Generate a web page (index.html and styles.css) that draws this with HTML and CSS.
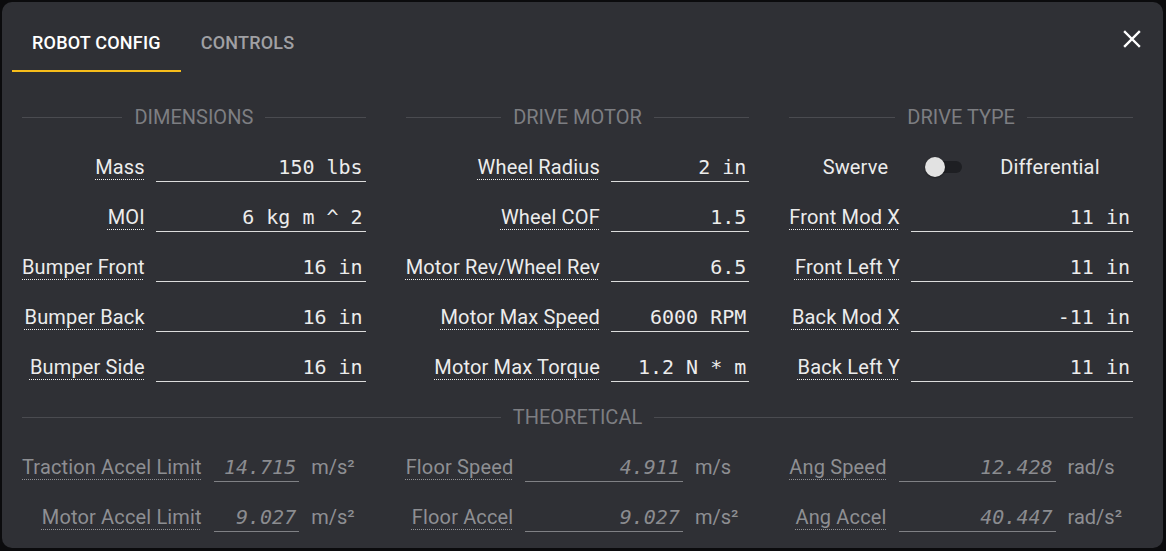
FILE: index.html
```html
<!DOCTYPE html>
<html>
<head>
<meta charset="utf-8">
<link rel="stylesheet" href="styles.css">
</head>
<body>
<div class="dialog">
  <div class="tabs">
    <div class="tab active">ROBOT CONFIG</div>
    <div class="tab">CONTROLS</div>
  </div>
  <svg class="close" viewBox="0 0 18 18" width="18" height="18"><path d="M2 2L16 16M16 2L2 16" stroke="#fff" stroke-width="2.4" stroke-linecap="square"/></svg>

  <div class="content">
    <div class="columns">
      <div class="col">
        <div class="header"><span class="line"></span><span class="htext">DIMENSIONS</span><span class="line"></span></div>
        <div class="form">
          <span class="label"><span class="dot">Mass</span></span><div class="input">150 lbs</div>
          <span class="label"><span class="dot">MOI</span></span><div class="input">6 kg m ^ 2</div>
          <span class="label"><span class="dot">Bumper Front</span></span><div class="input">16 in</div>
          <span class="label"><span class="dot">Bumper Back</span></span><div class="input">16 in</div>
          <span class="label"><span class="dot">Bumper Side</span></span><div class="input">16 in</div>
        </div>
      </div>
      <div class="col">
        <div class="header"><span class="line"></span><span class="htext">DRIVE MOTOR</span><span class="line"></span></div>
        <div class="form">
          <span class="label"><span class="dot">Wheel Radius</span></span><div class="input">2 in</div>
          <span class="label"><span class="dot">Wheel COF</span></span><div class="input">1.5</div>
          <span class="label"><span class="dot">Motor Rev/Wheel Rev</span></span><div class="input">6.5</div>
          <span class="label"><span class="dot">Motor Max Speed</span></span><div class="input">6000 RPM</div>
          <span class="label"><span class="dot">Motor Max Torque</span></span><div class="input">1.2 N * m</div>
        </div>
      </div>
      <div class="col">
        <div class="header"><span class="line"></span><span class="htext">DRIVE TYPE</span><span class="line"></span></div>
        <div class="switchrow">
          <span>Swerve</span>
          <span class="switch"><span class="track"></span><span class="thumb"></span></span>
          <span>Differential</span>
        </div>
        <div class="form">
          <span class="label"><span class="dot">Front Mod X</span></span><div class="input">11 in</div>
          <span class="label"><span class="dot">Front Left Y</span></span><div class="input">11 in</div>
          <span class="label"><span class="dot">Back Mod X</span></span><div class="input">-11 in</div>
          <span class="label"><span class="dot">Back Left Y</span></span><div class="input">11 in</div>
        </div>
      </div>
    </div>

    <div class="header theo-header"><span class="line"></span><span class="htext">THEORETICAL</span><span class="line"></span></div>
    <div class="columns">
      <div class="form3">
        <span class="label"><span class="dot">Traction Accel Limit</span></span><div class="input ro">14.715</div><span class="unit">m/s²</span>
        <span class="label"><span class="dot">Motor Accel Limit</span></span><div class="input ro">9.027</div><span class="unit">m/s²</span>
      </div>
      <div class="form3">
        <span class="label"><span class="dot">Floor Speed</span></span><div class="input ro">4.911</div><span class="unit">m/s</span>
        <span class="label"><span class="dot">Floor Accel</span></span><div class="input ro">9.027</div><span class="unit">m/s²</span>
      </div>
      <div class="form3">
        <span class="label"><span class="dot">Ang Speed</span></span><div class="input ro">12.428</div><span class="unit">rad/s</span>
        <span class="label"><span class="dot">Ang Accel</span></span><div class="input ro">40.447</div><span class="unit">rad/s²</span>
      </div>
    </div>
  </div>
</div>
</body>
</html>
```

FILE: styles.css
```css
html, body {
  margin: 0;
  padding: 0;
  background: #0b0b0d;
  height: 100%;
  overflow: hidden;
}
body {
  font-family: Roboto, "Liberation Sans", sans-serif;
  color: #e6e6e6;
}
.dialog {
  position: relative;
  margin: 2px 0 0 2px;
  width: 1161px;
  height: 546px;
  box-sizing: border-box;
  background: #2f3035;
  border-radius: 10px;
  padding-top: 10px;
}
.tabs {
  display: flex;
  padding-left: 10px;
  height: 60px;
}
.tab {
  box-sizing: border-box;
  height: 60px;
  padding: 2px 20px 0;
  display: flex;
  align-items: center;
  font-size: 18px;
  font-weight: 500;
  letter-spacing: 0.2px;
  color: #a0a0a4;
  border-bottom: 2px solid transparent;
}
.tab.active {
  color: #ffffff;
  border-bottom-color: #f7bd1b;
}
.close {
  position: absolute;
  top: 28px;
  right: 22px;
}
.content {
  padding: 0 30px 0 20px;
}
.columns {
  display: grid;
  grid-template-columns: repeat(3, 1fr);
  column-gap: 40px;
}
.header {
  display: flex;
  align-items: center;
  height: 24px;
  margin: 33px 0 13px;
  gap: 12px;
  color: #7d7e82;
  font-size: 20px;
}
.theo-header {
  margin: 13px 0 13px;
}
.line {
  flex: 1;
  height: 1px;
  background: #4a4b50;
}
.form {
  display: grid;
  grid-template-columns: auto 1fr;
  column-gap: 11px;
  grid-auto-rows: 50px;
  align-items: center;
}
.form3 {
  display: grid;
  grid-template-columns: auto 1fr auto;
  column-gap: 12px;
  grid-auto-rows: 50px;
  align-items: center;
  padding-right: 11px;
}
.label {
  text-align: right;
  font-size: 20px;
  letter-spacing: 0.15px;
  color: #ececec;
  white-space: nowrap;
}
.dot {
  text-decoration: underline dotted;
  text-decoration-thickness: 1px;
  text-underline-offset: 5px;
}
.input {
  box-sizing: border-box;
  height: 30px;
  line-height: 28px;
  padding-top: 1px;
  border-bottom: 1px solid #dcdcdc;
  text-align: right;
  padding-right: 3px;
  font-family: "DejaVu Sans Mono", "Liberation Mono", monospace;
  font-size: 20px;
  color: #ececec;
  white-space: pre;
}
.form3 .label {
  color: #8e8f93;
}
.input.ro {
  color: #8b8c90;
  font-style: italic;
  border-bottom-color: #808185;
}
.unit {
  font-size: 20px;
  color: #8e8f93;
}
.switchrow {
  display: flex;
  align-items: center;
  justify-content: center;
  gap: 37px;
  height: 50px;
  font-size: 20px;
  letter-spacing: 0.15px;
  color: #ececec;
}
.switch {
  position: relative;
  width: 38px;
  height: 20px;
  display: inline-block;
}
.track {
  position: absolute;
  left: 1px;
  top: 4px;
  width: 36px;
  height: 12px;
  border-radius: 6px;
  background: #1e1f23;
}
.thumb {
  position: absolute;
  left: 0;
  top: 0;
  width: 20px;
  height: 20px;
  border-radius: 50%;
  background: #e2e2e2;
  box-shadow: 0 1px 2px rgba(0,0,0,0.4);
}
```
